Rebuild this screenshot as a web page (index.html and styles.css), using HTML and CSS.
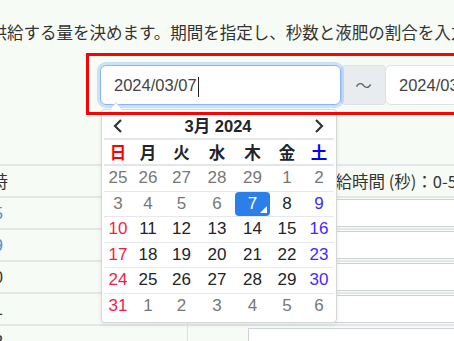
FILE: index.html
```html
<!DOCTYPE html>
<html>

<head>
  <meta charset="utf-8">
  <link rel="stylesheet" href="styles.css">
  <title>液肥供給の設定</title>
</head>
<body>
  <div class="page">
    <p class="lead">液肥を供給する量を決めます。期間を指定し、秒数と液肥の割合を入力してください。</p>

    <div class="range-box">
      <div class="input-group">
        <div class="form-control is-focused">2024/03/07<span class="caret"></span></div>
        <span class="input-group-text">～</span>
        <div class="form-control second">2024/03/07</div>
      </div>

      <!-- datepicker dropdown -->
      <div class="datepicker">
        <div class="dp-grid dp-nav">
          <span class="dp-arrow">
            <svg width="10" height="16" viewBox="0 0 10 16"><polyline points="8,2 2,8 8,14" /></svg>
          </span>
          <span class="dp-title">3月 2024</span>
          <span class="dp-arrow">
            <svg width="10" height="16" viewBox="0 0 10 16"><polyline points="2,2 8,8 2,14" /></svg>
          </span>
        </div>
        <div class="dp-grid dp-week">
          <span class="sun">日</span><span>月</span><span>火</span><span>水</span><span>木</span><span>金</span><span class="sat">土</span>
        </div>
        <div class="dp-body">
          <div class="dp-grid dp-row">
            <span class="off">25</span><span class="off">26</span><span class="off">27</span><span class="off">28</span><span class="off">29</span><span class="off">1</span><span class="off">2</span>
          </div>
          <div class="dp-grid dp-row">
            <span class="off">3</span><span class="off">4</span><span class="off">5</span><span class="off">6</span><span class="active">7</span><span>8</span><span class="sat">9</span>
          </div>
          <div class="dp-grid dp-row">
            <span class="sun">10</span><span>11</span><span>12</span><span>13</span><span>14</span><span>15</span><span class="sat">16</span>
          </div>
          <div class="dp-grid dp-row">
            <span class="sun">17</span><span>18</span><span>19</span><span>20</span><span>21</span><span>22</span><span class="sat">23</span>
          </div>
          <div class="dp-grid dp-row">
            <span class="sun">24</span><span>25</span><span>26</span><span>27</span><span>28</span><span>29</span><span class="sat">30</span>
          </div>
          <div class="dp-grid dp-row">
            <span class="sun">31</span><span class="off">1</span><span class="off">2</span><span class="off">3</span><span class="off">4</span><span class="off">5</span><span class="off">6</span>
          </div>
        </div>
      </div>
    </div>

    <table class="plan">
      <tr class="head">
        <td class="col-time">日時</td>
        <td class="col-name"></td>
        <td class="col-mix"></td>
        <td class="col-sec">水・液肥供給時間 (秒)：0-59</td>
      </tr>
      <tr>
        <td class="col-time link">05</td>
        <td class="col-name"></td>
        <td class="col-mix"></td>
        <td class="col-sec"><input type="text" class="cell-input"></td>
      </tr>
      <tr>
        <td class="col-time link">09</td>
        <td class="col-name"></td>
        <td class="col-mix"></td>
        <td class="col-sec"><input type="text" class="cell-input"></td>
      </tr>
      <tr>
        <td class="col-time">10</td>
        <td class="col-name"></td>
        <td class="col-mix"></td>
        <td class="col-sec"><input type="text" class="cell-input"></td>
      </tr>
      <tr>
        <td class="col-time">11</td>
        <td class="col-name"></td>
        <td class="col-mix"></td>
        <td class="col-sec"><input type="text" class="cell-input"></td>
      </tr>
      <tr>
        <td class="col-time">12</td>
        <td class="col-name"></td>
        <td class="col-mix"></td>
        <td class="col-sec"><input type="text" class="cell-input"></td>
      </tr>
    </table>
  </div>
</body>

</html>
```

FILE: styles.css
```css
html,
body {
  margin: 0;
  overflow: hidden;
}

body {
  font-family: "Liberation Sans", "Noto Sans CJK JP", sans-serif;
  font-size: 16.5px;
  color: #333;
  background-color: #f7fbf5;
  /* light green page */
}

/* the page is scrolled a bit to the right */
.page {
  margin-left: -59px;
  width: 1000px;
}

.lead {
  margin: 22px 0 0 0;
  line-height: 20px;
  white-space: nowrap;
  font-family: "Noto Sans CJK JP", sans-serif;
}

/* red highlight frame round the period inputs */
.range-box {
  position: relative;
  width: 700px;
  box-sizing: border-box;
  margin: 11px 0 0 145px;
  padding: 12px 0 10px 14px;
}

.range-box::after {
  content: "";
  position: absolute;
  top: 0;
  left: 0;
  right: 0;
  bottom: 0;
  border: 3px solid #ff0000;
  z-index: 3;
  pointer-events: none;
}

.input-group {
  display: flex;
}

.form-control {
  box-sizing: border-box;
  width: 241px;
  height: 40px;
  padding: 0 13px;
  line-height: 38px;
  background-color: #fff;
  border: 1px solid #dee2e6;
  border-radius: 6px;
  color: #444;
}

.form-control.is-focused {
  border-color: #86b7fe;
  box-shadow: 0 0 0 3px rgba(13, 110, 253, 0.18);
  position: relative;
  z-index: 1;
}

.form-control.second {
  width: 300px;
  margin-left: -1px;
}

.caret {
  display: inline-block;
  width: 1px;
  height: 20px;
  margin-left: 1px;
  background-color: #222;
  vertical-align: middle;
}

.input-group-text {
  box-sizing: border-box;
  width: 45px;
  height: 40px;
  line-height: 38px;
  text-align: center;
  background-color: #e9ecef;
  border: 1px solid #dee2e6;
  border-radius: 4px;
  color: #666;
  font-family: "Noto Sans CJK JP", sans-serif;
}

/* datepicker */
.datepicker {
  position: absolute;
  top: 56px;
  left: 15px;
  z-index: 2;
  box-sizing: border-box;
  width: 236px;
  padding: 4px 2px;
  background-color: #fff;
  border: 1px solid #d6d6d6;
  border-radius: 4px;
  box-shadow: 0 2px 5px rgba(0, 0, 0, 0.08);
  color: #212529;
}

.datepicker::before,
.datepicker::after {
  content: "";
  position: absolute;
  left: 7px;
  border-left: 7px solid transparent;
  border-right: 7px solid transparent;
}

.datepicker::before {
  top: -8px;
  border-bottom: 8px solid #d6d6d6;
}

.datepicker::after {
  top: -7px;
  border-bottom: 8px solid #fff;
}

.dp-grid {
  display: grid;
  grid-template-columns: 28px 32px 35px 36px 35px 34px 30px;
  text-align: center;
}

.dp-nav {
  height: 24px;
  align-items: center;
  border-bottom: 2px solid #e3e6e9;
}

.dp-arrow {
  display: flex;
  justify-content: center;
}

.dp-arrow svg polyline {
  fill: none;
  stroke: #333;
  stroke-width: 2.2;
}

.dp-title {
  grid-column: 2 / 7;
  font-weight: bold;
  line-height: 24px;
}

.dp-week {
  height: 24px;
  line-height: 24px;
  font-weight: bold;
  font-family: "Noto Sans CJK JP", sans-serif;
  border-bottom: 2px solid #e3e6e9;
}

.dp-row {
  height: 24.5px;
  line-height: 24.5px;
  font-size: 17px;
}

.dp-row + .dp-row {
  border-top: 1px solid #e6e8eb;
}

.dp-week .sun {
  color: #ff0000;
}

.dp-week .sat {
  color: #0000ff;
}

.dp-row .sun {
  color: #ff1744;
}

.dp-row .sat {
  color: #3d2bff;
}

.dp-row .off {
  color: #777;
}

.dp-row .active {
  position: relative;
  background-color: #2b7fe8;
  color: #fff;
  border-radius: 4px;
}

/* small corner mark on the selected day */
.dp-row .active::after {
  content: "";
  position: absolute;
  right: 3px;
  bottom: 3px;
  border-left: 7px solid transparent;
  border-bottom: 7px solid #fff;
}

/* table behind the picker */
.plan {
  margin-top: 49px;
  border-collapse: collapse;
  font-family: "Noto Sans CJK JP", sans-serif;
}

.plan td {
  height: 32px;
  padding: 0;
  border-top: 2px solid #e4e7ea;
  box-sizing: border-box;
}

.col-time {
  width: 73px;
  padding-right: 11px !important;
  text-align: right;
  font-family: "Liberation Sans", sans-serif;
}

.head .col-time {
  padding-right: 6px !important;
  font-family: "Noto Sans CJK JP", sans-serif;
}

.col-time.link {
  color: #4a8fd6;
}

.col-name {
  width: 173px;
}

.col-mix {
  width: 60px;
  border-left: 1px solid #dfe2e5;
}

.col-sec {
  width: 500px;
  padding: 1px !important;
}

.head .col-sec {
  padding-left: 6px !important;
  white-space: nowrap;
}

.cell-input {
  display: block;
  box-sizing: border-box;
  width: 100%;
  height: 28px;
  margin: 0;
  border: 1px solid #cfd2d5;
  background-color: #fff;
}
```
